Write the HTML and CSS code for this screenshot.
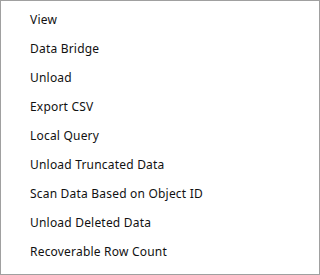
FILE: index.html
```html
<!DOCTYPE html>
<html>
<head>
<meta charset="utf-8">
<link rel="stylesheet" href="styles.css">
</head>
<body>
<div class="menu">
  <div class="item">View</div>
  <div class="item">Data Bridge</div>
  <div class="item">Unload</div>
  <div class="item">Export CSV</div>
  <div class="item">Local Query</div>
  <div class="item">Unload Truncated Data</div>
  <div class="item">Scan Data Based on Object ID</div>
  <div class="item">Unload Deleted Data</div>
  <div class="item">Recoverable Row Count</div>
</div>
</body>
</html>
```
FILE: styles.css
```css
html, body {
  margin: 0;
  padding: 0;
  background: #ffffff;
}
.menu {
  box-sizing: border-box;
  width: 320px;
  height: 275px;
  border: 1px solid #a0a0a0;
  background: #ffffff;
  padding-top: 4px;
  display: flex;
  flex-direction: column;
}
.item {
  height: 29px;
  line-height: 29px;
  padding-left: 29px;
  font-family: "Noto Sans", sans-serif;
  font-size: 12px;
  letter-spacing: 0.2px;
  color: #111111;
  white-space: nowrap;
}
```
